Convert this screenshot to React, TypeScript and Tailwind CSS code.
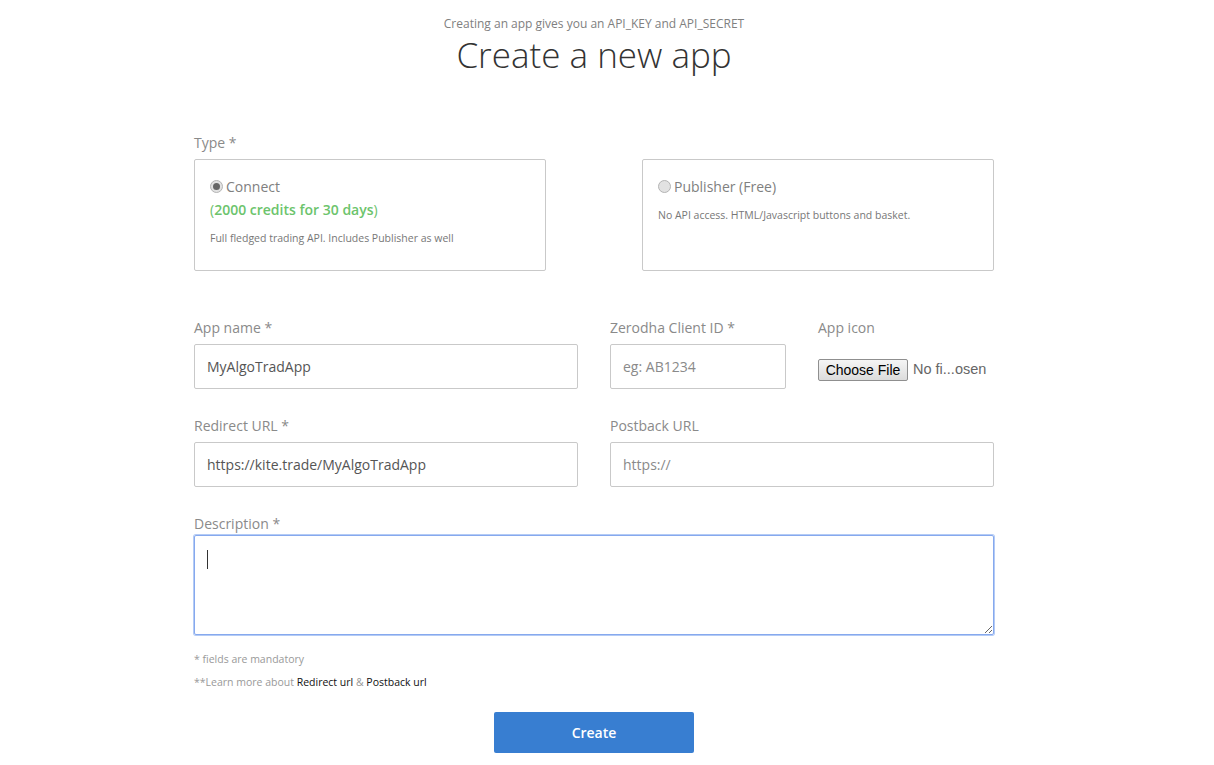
export default function App() {
  const labelCls = "block text-[14px] leading-[20px] text-[#8a8a8a]"
  const inputCls =
    "block h-[45px] w-full rounded-[2px] border border-[#c9c9c9] bg-white px-3 text-[14px] text-[#555555] outline-none placeholder:text-[#8a8a8a]"

  return (
    <div className="h-[765px] overflow-hidden bg-white font-['Open_Sans',sans-serif]">
      <div className="ml-[194px] w-[800px] pt-[15px]">
        <p className="text-center text-[12px] leading-[17px] text-[#808080]">
          Creating an app gives you an API_KEY and API_SECRET
        </p>
        <h1 className="text-center text-[35px] font-light leading-[46px] text-[#333333]">
          Create a new app
        </h1>

        <div className="mt-[55px]">
          <label className={labelCls}>Type *</label>
          <div className="mt-[6px] flex justify-between">
            <div className="h-[112px] w-[352px] rounded-[2px] border border-[#c9c9c9] px-[15px] pt-[17px]">
              <div className="flex items-center gap-[3px] text-[14px] leading-[20px] text-[#808080]">
                <span className="mb-[2px] flex h-[13px] w-[13px] items-center justify-center rounded-full border border-[#b4b4b4] bg-[#e2e2e2]">
                  <span className="h-[7px] w-[7px] rounded-full bg-[#666666]" />
                </span>
                Connect
              </div>
              <p className="mt-[3px] text-[14px] leading-[20px] text-[#6cbf6c]">
                (<span className="font-semibold text-[#6cc46c]">2000 credits for 30 days</span>)
              </p>
              <p className="mt-[10px] text-[10.5px] leading-[16px] text-[#777777]">
                Full fledged trading API. Includes Publisher as well
              </p>
            </div>
            <div className="h-[112px] w-[352px] rounded-[2px] border border-[#c9c9c9] px-[15px] pt-[17px]">
              <div className="flex items-center gap-[3px] text-[14px] leading-[20px] text-[#808080]">
                <span className="mb-[2px] h-[13px] w-[13px] rounded-full border border-[#b4b4b4] bg-[#e2e2e2]" />
                Publisher (Free)
              </div>
              <p className="mt-[10px] text-[10.5px] leading-[16px] text-[#777777]">
                No API access. HTML/Javascript buttons and basket.
              </p>
            </div>
          </div>
        </div>

        <div className="mt-[47px] flex gap-8">
          <div className="w-[384px]">
            <label className={labelCls}>App name *</label>
            <input className={`${inputCls} mt-[6px]`} defaultValue="MyAlgoTradApp" />
          </div>
          <div className="w-[176px]">
            <label className={labelCls}>Zerodha Client ID *</label>
            <input className={`${inputCls} mt-[6px]`} placeholder="eg: AB1234" />
          </div>
          <div className="w-[176px]">
            <label className={labelCls}>App icon</label>
            <div className="mt-[21px] flex items-center gap-[5px] font-['Liberation_Sans',sans-serif] text-[14.5px] text-[#666666]">
              <button className="h-[22px] w-[90px] rounded-[2px] border border-[#8f8f8f] bg-gradient-to-b from-[#f5f5f5] to-[#dcdcdc] text-[14px] leading-[20px] text-black">
                Choose File
              </button>
              <span>No fi...osen</span>
            </div>
          </div>
        </div>

        <div className="mt-[27px] flex gap-8">
          <div className="w-[384px]">
            <label className={labelCls}>Redirect URL *</label>
            <input className={`${inputCls} mt-[6px]`} defaultValue="https://kite.trade/MyAlgoTradApp" />
          </div>
          <div className="w-[384px]">
            <label className={labelCls}>Postback URL</label>
            <input className={`${inputCls} mt-[6px]`} placeholder="https://" />
          </div>
        </div>

        <div className="mt-[27px]">
          <label className={labelCls}>Description *</label>
          <div className="relative mt-[1px]">
            <textarea className="block h-[100px] w-full rounded-[2px] border border-[#86a9ee] px-3 py-2 text-[14px] text-[#555555] shadow-[0_0_0_1px_#b4cbf5] outline-none" />
            <span className="absolute left-[13px] top-[15px] h-[19px] w-px bg-[#333333]" />
          </div>
        </div>

        <p className="mt-[16px] text-[10.5px] leading-[16px] text-[#999999]">* fields are mandatory</p>
        <p className="mt-[7px] text-[10.5px] leading-[16px] text-[#999999]">
          **Learn more about <a className="text-[#111111]">Redirect url</a> &amp;{" "}
          <a className="text-[#111111]">Postback url</a>
        </p>

        <div className="mt-[22px] flex justify-center">
          <button className="h-[41px] w-[200px] rounded-[2px] bg-[#387ed1] text-[14px] font-semibold text-white">
            Create
          </button>
        </div>
      </div>
    </div>
  )
}
